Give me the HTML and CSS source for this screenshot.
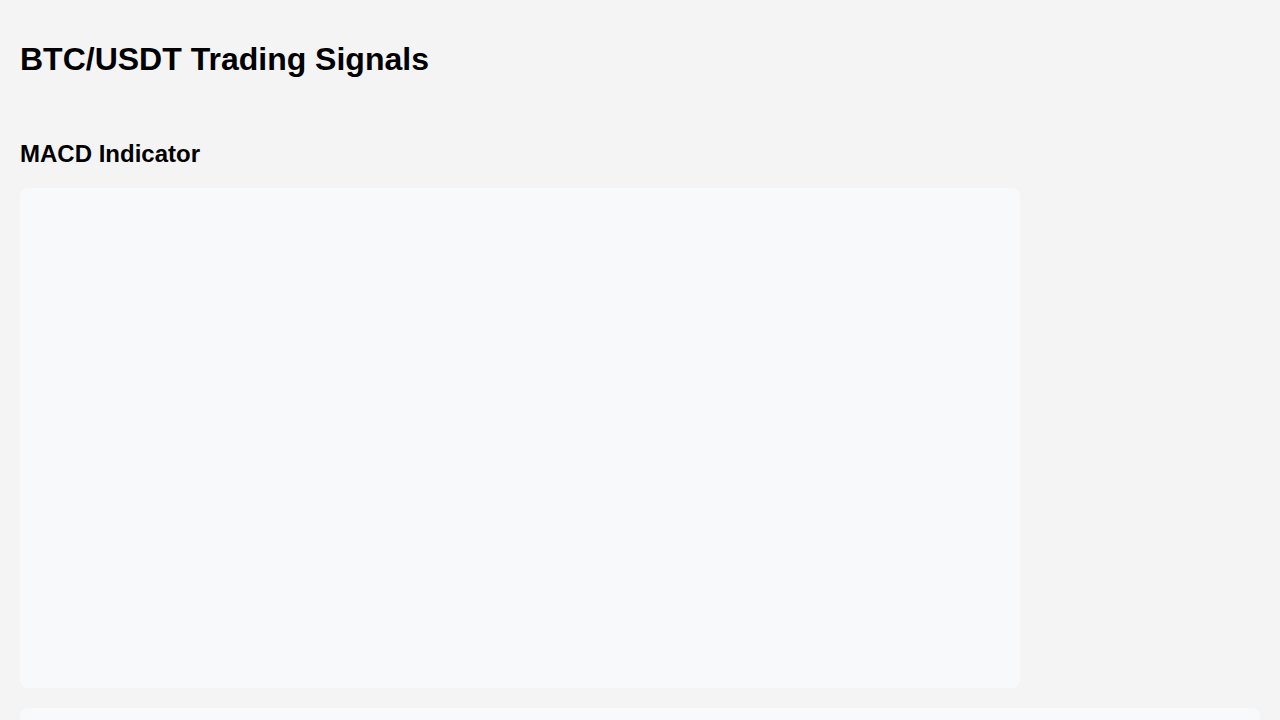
FILE: index.html
```html
<!DOCTYPE html>
<html lang="en">
<head>
<meta charset="utf-8">
<title>BTC/USDT Trading Signals</title>
<link rel="stylesheet" href="styles.css">
</head>
<body>
<header class="page-header">
  <h1 class="title">BTC/USDT Trading Signals</h1>
</header>
<main class="content">
  <section class="indicator">
    <h2 class="indicator-title">MACD Indicator</h2>
    <div class="chart"></div>
  </section>
  <section class="panel"></section>
</main>
</body>
</html>
```
FILE: styles.css
```css
html, body {
  margin: 0;
}
body {
  padding: 20px;
  background: #f4f4f4;
  font-family: "Liberation Sans", Arial, sans-serif;
  color: #000;
}
.title {
  font-size: 32px;
  font-weight: bold;
  margin: 21.44px 0;
}
.content {
  padding-top: 20px;
  display: flex;
  flex-direction: column;
  gap: 20px;
}
.indicator-title {
  font-size: 24px;
  font-weight: bold;
  margin: 19.92px 0;
}
.chart {
  width: 1000px;
  height: 500px;
  background: #f8f9fa;
  border-radius: 8px;
}
.panel {
  height: 300px;
  background: #f8f9fa;
  border-radius: 8px;
}
```
